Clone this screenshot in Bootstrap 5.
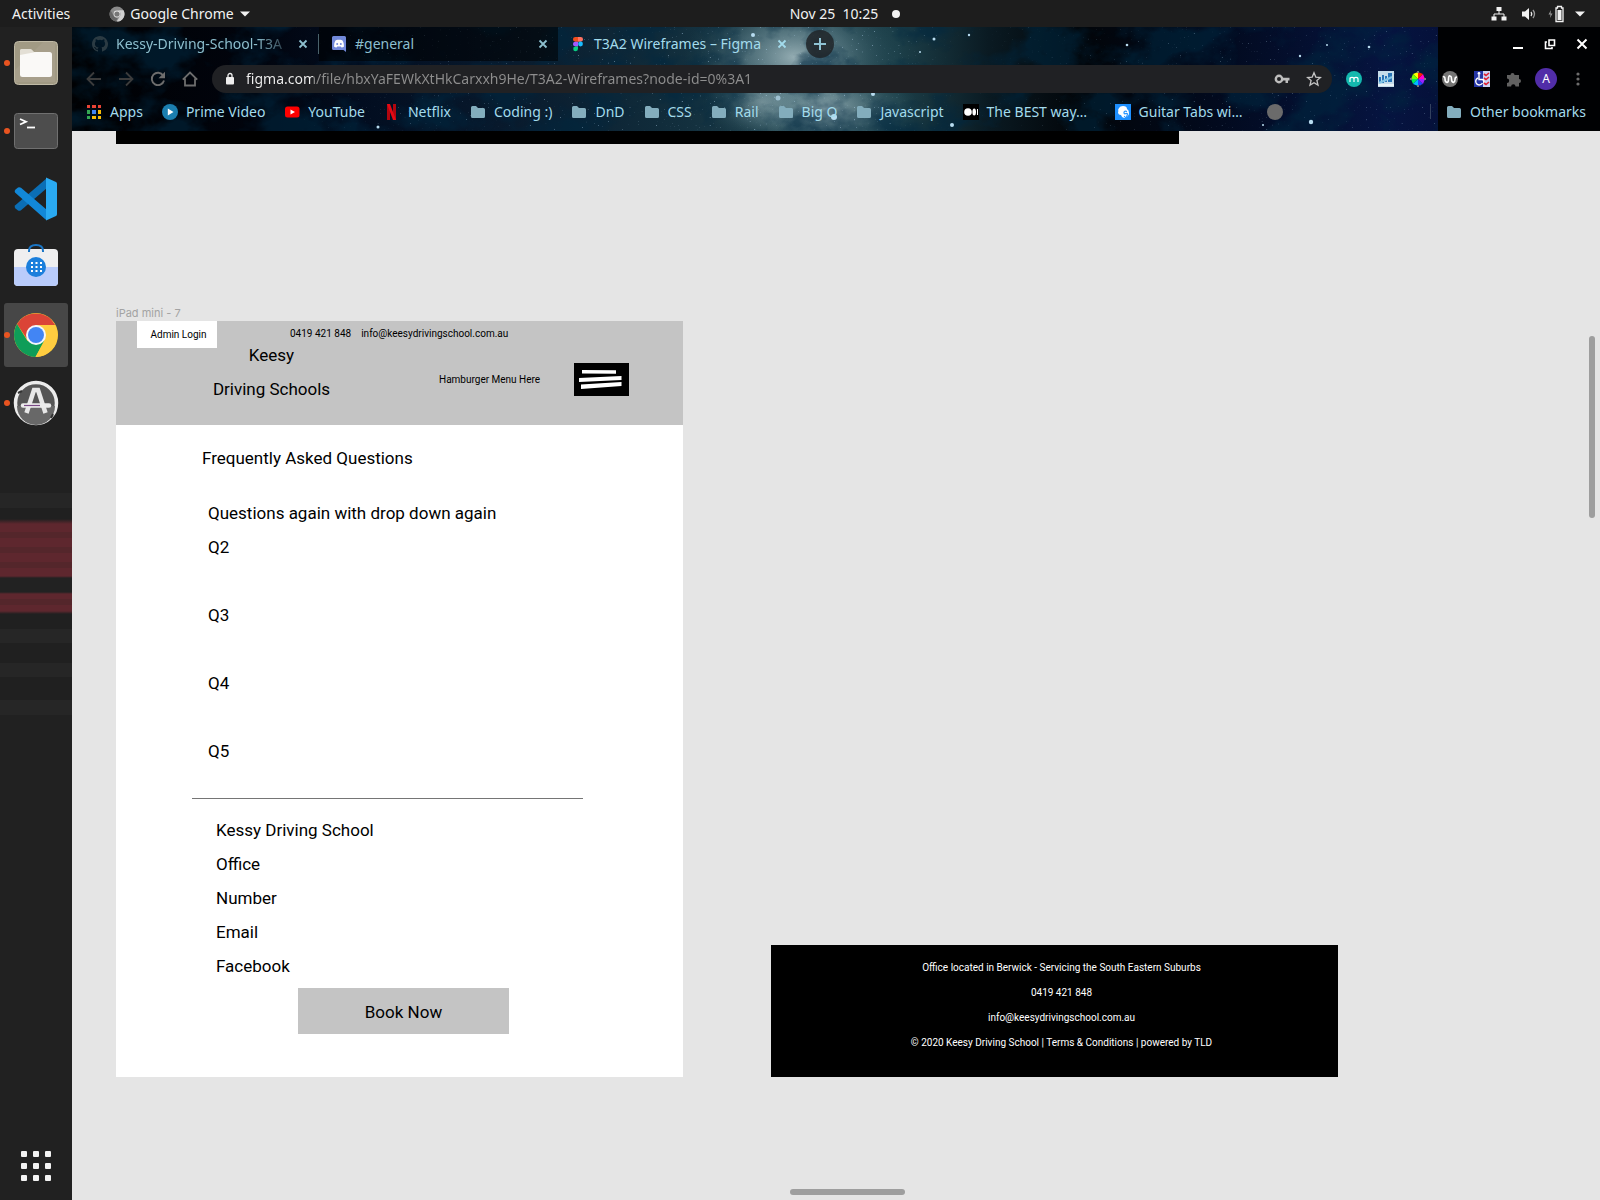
<!DOCTYPE html>
<html lang="en">
<head>
<meta charset="utf-8">
<meta name="viewport" content="width=device-width, initial-scale=1">
<title>T3A2 Wireframes – Figma</title>
<link href="https://cdn.jsdelivr.net/npm/bootstrap@5.3.0/dist/css/bootstrap.min.css" rel="stylesheet">
<style>
  body { background: #e5e5e5; font-family: "Noto Sans", sans-serif; font-size: 14px; line-height: 20px; color: #000; }
  svg { display: block; flex: none; }
  a { color: inherit; text-decoration: none; }
  button { border: 0; background: none; color: inherit; padding: 0; }

  /* desktop bar */
  .topbar { height: 27px; background: #1d1d1d; color: #f2f2f2; padding: 0 14px 0 12px; }
  .topbar-side { flex: 1 1 0; }
  .app-menu { margin-left: 39px; gap: 5px; }
  .topbar-clock { padding-left: 92px; gap: 14px; white-space: pre; }
  .rec-dot { width: 8px; height: 8px; border-radius: 50%; background: #f2f2f2; }

  /* dock */
  .dock { width: 72px; padding: 4px 4px 2px; gap: 4px;
    background: linear-gradient(#212121 0 466px, #262626 466px 481px, #202020 481px 492px, #5e272e 497px 505px, #54262b 505px 511px, #5e272e 511px 520px, #54262b 520px 526px, #5e272e 526px 535px, #54262b 535px 541px, #5e272e 541px 549px, #222 551px 565px, #5e272e 567px 572px, #54262b 572px 578px, #5e272e 578px 584px, #202020 587px 602px, #262626 602px 616px, #202020 616px 636px, #262626 636px 650px, #202020 650px 673px, #262626 673px 688px, #212121 688px); }
  .dock-item { height: 64px; width: 64px; border-radius: 3px; position: relative; display: flex; align-items: center; justify-content: center; }
  .dock-item.focused { background: #474747; }
  .dock-item.running::before { content: ""; position: absolute; left: 0; top: 29px; width: 6px; height: 6px; border-radius: 50%; background: #e95420; }

  /* browser */
  .browser { min-width: 0; }
  .browser-head { position: relative; height: 104px; color: #a3dbec; background: #000; }
  .sky { position: absolute; inset: 0; width: 100%; height: 100%; }
  .tabs, .toolbar, .bookmarks { position: relative; display: flex; align-items: center; }
  .tabs { height: 34px; padding-left: 8px; }
  .tab { width: 239px; height: 34px; padding: 0 7px 0 12px; gap: 8px; display: flex; align-items: center; }
  .tab.idle { background: rgba(0,0,0,.55); color: #8dbfce; }
  .tab.divided { border-right: 1px solid #4a626b; height: 20px; background: none; }
  .tab-text { flex: 1; white-space: nowrap; }
  .tab-text.faded { -webkit-mask-image: linear-gradient(90deg, #000 140px, rgba(0,0,0,.2) 172px); mask-image: linear-gradient(90deg, #000 140px, rgba(0,0,0,.2) 172px); }
  .new-tab { width: 28px; height: 28px; border-radius: 50%; background: rgba(32,36,40,.85); margin-left: 9px; display: flex; align-items: center; justify-content: center; }
  .win-controls { margin-left: auto; padding-right: 2px; }
  .tool { width: 32px; height: 32px; display: flex; align-items: center; justify-content: center; flex: none; }
  .toolbar { height: 36px; padding: 0 6px; }
  .omnibox { height: 28px; border-radius: 14px; background: #202124; margin: 0 6px; padding: 0 2px 0 12px; }
  .omnibox input { border: 0; outline: 0; padding: 0; margin-left: 10px; min-width: 0; color: transparent; background: linear-gradient(90deg, #f1f1f1 67px, #8e8e8e 67px); -webkit-background-clip: text; background-clip: text; }
  .profile { width: 22px; height: 22px; border-radius: 50%; background: #512da8; color: #fff; font-size: 12px; line-height: 22px; }
  .bookmarks { height: 30px; padding: 0 14px; gap: 19px; white-space: nowrap; }
  .bookmarks a { display: flex; align-items: center; gap: 8px; }
  .long-title { min-width: 109px; }
  .site-dot { width: 16px; height: 16px; border-radius: 50%; background: #6b6b6b; }

  /* design canvas */
  .canvas { position: relative; font-family: Roboto, sans-serif; padding-left: 44px; }
  .frame-above { height: 13px; max-width: 1063px; background: #000; }
  .artboards { margin-top: 161px; gap: 88px; }
  .artboard-label { font: 11px/16px Inter, sans-serif; color: #a3a3a3; }
  .artboard { width: 567px; background: #fff; font-size: 17px; line-height: 34px; padding-bottom: 43px; }
  .artboard-head { background: #c4c4c4; height: 104px; font-size: 10px; }
  .contact-row { height: 27px; padding-left: 21px; line-height: 26px; }
  .admin-btn { width: 80px; height: 27px; background: #fff; padding-left: 3px; }
  .contact-list { margin-left: 73px; gap: 10px; }
  .brand-row { margin-top: -10px; padding-left: 96px; }
  .brand { width: 119px; font-size: 17px; text-align: center; white-space: nowrap; }
  .menu-hint { margin-left: 108px; padding-top: 25px; width: 135px; }
  .menu-btn { width: 55px; height: 33px; background: #000; margin-top: 25px; }
  .faq-title { font-size: 17px; line-height: 34px; font-weight: 400; margin: 16px 0 21px 86px; }
  .faq-list { margin: 0 0 0 92px; padding: 0; list-style: none; }
  .faq-list li + li + li { margin-top: 34px; }
  .rule { width: 391px; height: 1px; background: #757575; margin: 30px 0 14px 76px; opacity: 1; border: 0; }
  .info-list { margin: 0 0 5px 100px; padding: 0; list-style: none; }
  .book-btn { display: block; width: 211px; height: 46px; background: #c4c4c4; margin-left: 182px; padding-top: 1px; }
  .footer-board { width: 567px; height: 132px; background: #000; color: #fff; font-size: 10px; line-height: 25px; padding: 10px 0 0 14px; text-align: center; }
  .bar-v, .bar-h { position: absolute; background: #9e9e9e; border-radius: 3px; }
  .bar-v { right: 5px; top: 205px; width: 6px; height: 182px; }
  .bar-h { left: 718px; bottom: 5px; width: 115px; height: 6px; }
</style>
<script src="https://cdn.jsdelivr.net/npm/bootstrap@5.3.0/dist/js/bootstrap.bundle.min.js"></script>
</head>
<body class="d-flex flex-column min-vh-100">

<svg width="0" height="0" class="position-absolute">
  <symbol id="folder" viewBox="0 0 16 16"><path d="M1 3.500a1.500 1.500 0 0 1 1.500-1.500H6l2 2h5.500A1.500 1.500 0 0 1 15 5.500v7a1.500 1.500 0 0 1-1.500 1.500h-11A1.500 1.500 0 0 1 1 12.500z" fill="#83adbd"/></symbol>
  <symbol id="cross" viewBox="0 0 16 16"><path d="M4.500 4.500l7 7M11.500 4.500l-7 7" stroke="currentColor" stroke-width="1.800" fill="none"/></symbol>
</svg>

<header class="topbar d-flex align-items-center">
  <div class="topbar-side d-flex align-items-center">
    <button>Activities</button>
    <button class="app-menu d-flex align-items-center">
      <svg width="16" height="16" viewBox="0 0 16 16"><circle cx="8" cy="8" r="7.500" fill="#8a8a8a"/><path d="M8 4.300h6.500a7.500 7.500 0 0 1-6.800 11.200l3.400-5.600A3.700 3.700 0 0 0 8 4.300z" fill="#d0d0d0"/><path d="M1.500 4.200L4.800 10a3.700 3.700 0 0 0 4 1.600L7 15.400A7.500 7.500 0 0 1 1.500 4.200z" fill="#666"/><circle cx="8" cy="8" r="3.400" fill="#e6e6e6"/><circle cx="8" cy="8" r="2.600" fill="#777"/></svg>
      <span>Google Chrome</span>
      <svg width="12" height="12" viewBox="0 0 12 12"><path d="M1 3.500h10L6 8.500z" fill="#f2f2f2"/></svg>
    </button>
  </div>
  <div class="topbar-clock d-flex align-items-center"><span>Nov 25  10:25</span><span class="rec-dot"></span></div>
  <div class="topbar-side d-flex align-items-center justify-content-end gap-2">
    <svg width="18" height="16" viewBox="0 0 18 16" fill="#f2f2f2"><path d="M6.500 1h5v4h-5zM1.500 10.500h5v4h-5zM11.500 10.500h5v4h-5z"/><path d="M9 5v3M4 11V8h10v3" stroke="#f2f2f2" fill="none"/></svg>
    <svg class="ms-1" width="18" height="16" viewBox="0 0 18 16"><path d="M2 5.500h3L9 2v12L5 10.500H2z" fill="#f2f2f2"/><path d="M11 6q1.500 2 0 4" stroke="#eee" stroke-width="1.300" fill="none"/><path d="M13 4q3 4 0 8" stroke="#999" stroke-width="1.300" fill="none"/></svg>
    <svg width="20" height="18" viewBox="0 0 20 18"><path d="M5 5L2.500 9.500h2L4 13l2.500-4.500h-2z" fill="#999"/><path d="M10 3h1.500V1.500h4V3H17v13.500h-7z" fill="none" stroke="#f2f2f2" stroke-width="1.300"/><path d="M11.500 5h4v10h-4z" fill="#f2f2f2"/></svg>
    <svg width="12" height="12" viewBox="0 0 12 12"><path d="M1 3.500h10L6 8.500z" fill="#f2f2f2"/></svg>
  </div>
</header>

<div class="d-flex flex-grow-1">
  <nav class="dock d-flex flex-column flex-shrink-0" aria-label="Dock">
    <a href="#" class="dock-item running" aria-label="Files"><svg width="46" height="46" viewBox="0 0 46 46"><rect x="1.500" y="1.500" width="43" height="43" rx="4" fill="#a19a84" stroke="#c0baa6"/><path d="M2 30L30 2h12v40H2z" fill="#aba48f" opacity=".6"/><path d="M7 11q0-2 2-2h8l4 3h1v8H7z" fill="#e3dfd5"/><rect x="7" y="12" width="32" height="25" rx="2.500" fill="#faf9f7"/><path d="M7 15V11q0-2 2-2h8q2 0 3 2t3 1z" fill="#e3dfd5"/></svg></a>
    <a href="#" class="dock-item running" aria-label="Terminal"><svg width="46" height="46" viewBox="0 0 46 46"><rect x="1.500" y="5.500" width="43" height="35" rx="3" fill="#4d4d4d" stroke="#707070"/><path d="M7 11l6 2.700L7 16.500" stroke="#fff" stroke-width="1.800" fill="none"/><path d="M14 19.500h8" stroke="#fff" stroke-width="1.800"/></svg></a>
    <a href="#" class="dock-item" aria-label="Visual Studio Code"><svg width="46" height="46" viewBox="0 0 46 46"><path d="M2 29.500q-1 1.500.5 3l2.500 2q1.500.8 3-.3L34 12V2z" fill="#0b6eb5"/><path d="M2 16.500q-1-1.500.5-3l2.500-2q1.500-.8 3 .3L34 34v10q-1 0-2-1z" fill="#1288d8"/><path d="M33 1.500L43 6q1 .6 1 2v30q0 1.400-1 2l-10 4.500z" fill="#2aaaf2"/></svg></a>
    <a href="#" class="dock-item" aria-label="Software"><svg width="46" height="46" viewBox="0 0 46 46"><rect x="1" y="5" width="44" height="37" rx="4" fill="#efeff0"/><path d="M1 23h44v15q0 4-4 4H5q-4 0-4-4z" fill="#b9ccfb"/><path d="M16 8V7q0-6 7-6t7 6v1" fill="none" stroke="#1a76c6" stroke-width="2"/><circle cx="23" cy="23" r="10" fill="#1b7fdc"/><path d="M18 19h11M18 23h11M18 27h11" stroke="#fff" stroke-width="2" stroke-dasharray="2 2.500"/></svg></a>
    <a href="#" class="dock-item running focused" aria-label="Google Chrome"><svg width="46" height="46" viewBox="0 0 46 46"><circle cx="23" cy="23" r="22" fill="#fc3"/><path d="M4 12A22 22 0 0 1 42.100 13H23l-9 14z" fill="#db4437"/><path d="M4 12a22 22 0 0 0 18.500 33L31 29 14.500 29z" fill="#0f9d58"/><path d="M23 13h19.100A22 22 0 0 1 22.500 45l9-16z" fill="#ffcd40"/><circle cx="23" cy="23" r="10" fill="#f4f6fb"/><circle cx="23" cy="23" r="8" fill="#4285f4"/></svg></a>
    <a href="#" class="dock-item running" aria-label="Software Updater"><svg width="46" height="46" viewBox="0 0 46 46"><circle cx="23" cy="23" r="20.500" fill="#555" stroke="#ececec" stroke-width="3.500"/><path d="M4 26h38a19 19 0 0 1-38 0z" fill="#686868"/><path d="M5 13l4-2M38 38l2-4" stroke="#333" stroke-width="2"/><path d="M13.500 33L21 10h4l7.500 23" fill="none" stroke="#e8e8e8" stroke-width="4.500"/><path d="M10 25.500h26" stroke="#ececec" stroke-width="4.500" stroke-linecap="round"/><path d="M11 25.500h16" stroke="#7a4a86" stroke-width="1.200"/></svg></a>
    <a href="#" class="dock-item mt-auto" aria-label="Show Applications"><svg width="30" height="30" viewBox="0 0 30 30" fill="#f2f2f2"><rect width="6" height="6" rx="1"/><rect x="12" width="6" height="6" rx="1"/><rect x="24" width="6" height="6" rx="1"/><rect y="12" width="6" height="6" rx="1"/><rect x="12" y="12" width="6" height="6" rx="1"/><rect x="24" y="12" width="6" height="6" rx="1"/><rect y="24" width="6" height="6" rx="1"/><rect x="12" y="24" width="6" height="6" rx="1"/><rect x="24" y="24" width="6" height="6" rx="1"/></svg></a>
  </nav>

  <div class="browser d-flex flex-column flex-grow-1">
    <div class="browser-head">
      <svg class="sky" viewBox="0 0 1528 104" preserveAspectRatio="none">
        <defs>
          <linearGradient id="base"><stop offset="0" stop-color="#000103"/><stop offset=".12" stop-color="#01040d"/><stop offset=".19" stop-color="#020d20"/><stop offset=".28" stop-color="#08192c"/><stop offset=".38" stop-color="#102b3a"/><stop offset=".46" stop-color="#1b3c48"/><stop offset=".54" stop-color="#1c3f49"/><stop offset=".6" stop-color="#0a1a22"/><stop offset=".66" stop-color="#020509"/><stop offset=".75" stop-color="#020a1e"/><stop offset=".86" stop-color="#061440"/><stop offset=".9" stop-color="#051039"/></linearGradient>
          <radialGradient id="glow"><stop offset="0" stop-color="#a9c0c5" stop-opacity=".85"/><stop offset=".5" stop-color="#6d8f98" stop-opacity=".5"/><stop offset="1" stop-color="#2a525c" stop-opacity="0"/></radialGradient>
          <filter id="cloud" x="0" y="0" width="1" height="1"><feTurbulence type="fractalNoise" baseFrequency=".018 .024" numOctaves="5" seed="8"/><feColorMatrix values="0 0 0 0 0  0 0 0 0 .02  0 0 0 0 .05  4 0 0 0 -1.700"/></filter>
          <filter id="dust" x="0" y="0" width="1" height="1"><feTurbulence type="fractalNoise" baseFrequency=".5" numOctaves="2" seed="3"/><feColorMatrix values="0 0 0 0 .45  0 0 0 0 .65  0 0 0 0 .85  10 0 0 0 -7.200"/></filter>
          <linearGradient id="fade"><stop offset=".15" stop-color="#000"/><stop offset=".3" stop-color="#bbb"/><stop offset=".58" stop-color="#fff"/><stop offset=".65" stop-color="#111"/><stop offset=".8" stop-color="#888"/></linearGradient>
          <mask id="starmask"><rect width="1366" height="104" fill="url(#fade)"/></mask>
        </defs>
        <rect width="1528" height="104" fill="url(#base)"/>
        <ellipse cx="722" cy="30" rx="110" ry="70" fill="url(#glow)"/>
        <ellipse cx="752" cy="82" rx="95" ry="46" fill="url(#glow)"/>
        <ellipse cx="690" cy="75" rx="60" ry="40" fill="url(#glow)" opacity=".6"/>
        <rect width="1366" height="104" filter="url(#cloud)" opacity=".6"/>
        <g mask="url(#starmask)"><rect width="1366" height="104" filter="url(#dust)" opacity=".5"/></g>
        <g fill="#b8dcf0"><circle cx="681" cy="8" r="2"/><circle cx="862" cy="12" r="1.500"/><circle cx="897" cy="8" r="1.200"/><circle cx="1055" cy="18" r="1.300"/><circle cx="1255" cy="18" r="1"/><circle cx="1297" cy="20" r="1.300"/><circle cx="1228" cy="29" r="1.200"/><circle cx="880" cy="98" r="2"/><circle cx="801" cy="67" r="2"/><circle cx="762" cy="90" r="3"/><circle cx="706" cy="71" r="2.500" opacity=".7"/><circle cx="1239" cy="95" r="2.200"/><circle cx="1191" cy="98" r="1"/><circle cx="306" cy="100" r="1.500"/><circle cx="345" cy="82" r="1"/><circle cx="848" cy="25" r="1"/></g>
        <path d="M1358.500 77v15" stroke="#33415f"/>
        <rect x="1366" width="162" height="104" fill="#000103"/>
      </svg>

      <div class="tabs">
        <div class="tab idle divided"><svg width="16" height="16" viewBox="0 0 16 16"><path fill="#2b3b43" d="M8 0C3.580 0 0 3.580 0 8c0 3.540 2.290 6.530 5.470 7.590.4.070.55-.17.55-.38 0-.19-.01-.82-.01-1.490-2.010.37-2.530-.49-2.690-.94-.09-.23-.48-.94-.82-1.130-.28-.15-.68-.52-.01-.53.63-.01 1.080.58 1.230.82.72 1.210 1.870.87 2.330.66.070-.52.28-.87.51-1.070-1.780-.2-3.640-.89-3.640-3.950 0-.87.31-1.590.82-2.150-.08-.2-.36-1.020.08-2.120 0 0 .67-.21 2.200.82a7.600 7.600 0 0 1 4 0c1.530-1.040 2.200-.82 2.200-.82.44 1.100.16 1.920.08 2.120.51.56.82 1.270.82 2.150 0 3.070-1.870 3.750-3.650 3.950.29.25.54.73.54 1.480 0 1.070-.01 1.930-.01 2.200 0 .21.15.46.55.38A8 8 0 0 0 8 0z"/></svg><a href="#" class="tab-text faded">Kessy-Driving-School-T3A</a><button aria-label="Close tab"><svg width="16" height="16"><use href="#cross"/></svg></button></div>
        <div class="tab idle"><svg width="16" height="16" viewBox="0 0 16 16"><path d="M2.500 0h11Q15 0 15 1.500V16l-2.500-2h-10Q1 14 1 12.500v-11Q1 0 2.500 0z" fill="#7289da"/><path d="M3 10.500q0-4 1.500-6Q6 3.500 7 3.800h2q1-.3 2.500.7Q13 6.500 13 10.500q-1 1-2.500 1l-.7-1H6.200l-.7 1q-1.500 0-2.500-1z" fill="#fff"/><circle cx="6.200" cy="8" r="1" fill="#7289da"/><circle cx="9.800" cy="8" r="1" fill="#7289da"/></svg><a href="#" class="tab-text">#general</a><button aria-label="Close tab"><svg width="16" height="16"><use href="#cross"/></svg></button></div>
        <div class="tab"><svg width="16" height="16" viewBox="0 0 16 16"><path d="M8 1v4.700H5.300a2.350 2.350 0 0 1 0-4.700z" fill="#f24e1e"/><path d="M8 1h2.700a2.350 2.350 0 0 1 0 4.700H8z" fill="#ff7262"/><path d="M8 5.700v4.700H5.300a2.350 2.350 0 0 1 0-4.700z" fill="#a259ff"/><circle cx="10.500" cy="8" r="2.400" fill="#1abcfe"/><path d="M8 10.400v2.300a2.400 2.400 0 1 1-2.500-2.300z" fill="#0acf83"/></svg><a href="#" class="tab-text">T3A2 Wireframes – Figma</a><button aria-label="Close tab"><svg width="16" height="16"><use href="#cross"/></svg></button></div>
        <button class="new-tab" aria-label="New tab"><svg width="14" height="14" viewBox="0 0 14 14"><path d="M7 1v12M1 7h12" stroke="#8fc3d4" stroke-width="2"/></svg></button>
        <div class="win-controls d-flex text-white">
          <button class="tool" aria-label="Minimize"><svg width="12" height="12" viewBox="0 0 12 12"><path d="M1 10h10" stroke="#fff" stroke-width="2"/></svg></button>
          <button class="tool" aria-label="Restore"><svg width="12" height="12" viewBox="0 0 12 12" fill="none" stroke="#fff" stroke-width="1.600"><path d="M5 2h5.500v5.500H5zM3 4H1.500v6.500H8V9"/></svg></button>
          <button class="tool" aria-label="Close"><svg width="12" height="12" viewBox="0 0 12 12"><path d="M1.500 1.500l9 9M10.500 1.500l-9 9" stroke="#fff" stroke-width="2"/></svg></button>
        </div>
      </div>

      <div class="toolbar">
        <button class="tool" aria-label="Back"><svg width="16" height="16" viewBox="0 0 16 16" fill="none" stroke="#3c3c3c" stroke-width="1.800"><path d="M15 8H2M8 1.500L1.500 8 8 14.500"/></svg></button>
        <button class="tool" aria-label="Forward"><svg width="16" height="16" viewBox="0 0 16 16" fill="none" stroke="#3c3c3c" stroke-width="1.800"><path d="M1 8h13M8 1.500L14.500 8 8 14.500"/></svg></button>
        <button class="tool" aria-label="Reload"><svg width="16" height="16" viewBox="0 0 16 16"><path d="M13.200 4.500A6.200 6.200 0 1 0 14 9.500" fill="none" stroke="#6d6d6d" stroke-width="1.900"/><path d="M15 .8v6.500H8.500z" fill="#6d6d6d"/></svg></button>
        <button class="tool" aria-label="Home"><svg width="16" height="16" viewBox="0 0 16 16" fill="none" stroke="#6d6d6d" stroke-width="1.800"><path d="M.8 8.700L8 1.500l7.200 7.200M3 7.500v7h10v-7"/></svg></button>
        <div class="omnibox d-flex align-items-center flex-grow-1">
          <svg width="12" height="14" viewBox="0 0 12 14"><rect x="2" y="5" width="8" height="7.500" rx="1" fill="#eee"/><path d="M4 5.500v-2a2 2 0 0 1 4 0v2" fill="none" stroke="#eee" stroke-width="1.300"/></svg>
          <input class="flex-grow-1" type="text" aria-label="Address" value="figma.com/file/hbxYaFEWkXtHkCarxxh9He/T3A2-Wireframes?node-id=0%3A1">
          <button class="tool" aria-label="Passwords"><svg width="16" height="16" viewBox="0 0 16 16"><circle cx="5" cy="8" r="3.200" fill="none" stroke="#bdbdbd" stroke-width="2.400"/><path d="M8 6.800h7.500v2.700H14V12h-2.500V9.500H8z" fill="#bdbdbd"/></svg></button>
          <button class="tool" aria-label="Bookmark"><svg width="16" height="16" viewBox="0 0 16 16"><path d="M8 1.800l1.800 4.300 4.700.4-3.600 3 1.100 4.600L8 11.700l-4 2.400 1.100-4.600-3.600-3 4.700-.4z" fill="none" stroke="#c4c4c4" stroke-width="1.300"/></svg></button>
        </div>
        <button class="tool" aria-label="Extension m"><svg width="16" height="16" viewBox="0 0 16 16"><circle cx="8" cy="8" r="8" fill="#14b8ae"/><path d="M4 11V6.500M4 8q0-1.700 2-1.700T8 8v3M8 8q0-1.700 2-1.700T12 8v3" fill="none" stroke="#fff" stroke-width="1.200"/></svg></button>
        <button class="tool" aria-label="Extension chart"><svg width="16" height="16" viewBox="0 0 16 16"><rect width="16" height="16" fill="#c5dcea"/><path d="M1 6h2v5H1zM4 4h2v8H4zM7 5h2v6H7zM10 2h4v9h-4z" fill="#2874b8"/><path d="M1 12L14 6" stroke="#82c4e5" stroke-width="2"/><path d="M0 14h16" stroke="#e8f2f7" stroke-width="2"/></svg></button>
        <button class="tool" aria-label="Colour picker"><svg width="16" height="16" viewBox="0 0 16 16"><path d="M8 8V1L3 3z" fill="#ff0"/><path d="M8 8L3 3 1 8z" fill="#7f0"/><path d="M8 8H1l2 5z" fill="#0e5"/><path d="M8 8l-5 5 5 2z" fill="#0bf"/><path d="M8 8v7l5-2z" fill="#24f"/><path d="M8 8l5 5 2-5z" fill="#92f"/><path d="M8 8h7l-2-5z" fill="#f0c"/><path d="M8 8l5-5-5-2z" fill="#f20"/><path d="M8 0v2M8 14v2M0 8h2M14 8h2" stroke="#777" stroke-width="2"/></svg></button>
        <button class="tool" aria-label="Extension wave"><svg width="16" height="16" viewBox="0 0 16 16"><circle cx="8" cy="8" r="8" fill="#757575"/><path d="M1 6q2-1 2 2t2 3.500q1.500 0 1.500-3.500T8 5q1.500 0 1.500 3t2 3.500q1.500-.5 1.500-3T15 6" fill="none" stroke="#fff" stroke-width="1.600"/></svg></button>
        <button class="tool" aria-label="Accessibility"><svg width="16" height="16" viewBox="0 0 16 16"><rect width="16" height="16" fill="#ccd3f3"/><path d="M0 0h9v16H0z" fill="#2535a5"/><circle cx="5" cy="2.500" r="1.400" fill="#fff"/><path d="M5 4v4.500h4l1.500 4M4 7a3.600 3.600 0 1 0 4.500 5" fill="none" stroke="#fff" stroke-width="1.400"/><path d="M10 3l2 1.500L15 2M10 7l2 1.500L15 6M10 12l2 1.500 3-2.500" fill="none" stroke="#e02030" stroke-width="1.600"/></svg></button>
        <button class="tool" aria-label="Extensions"><svg width="16" height="16" viewBox="0 0 16 16"><path d="M1 4h3.500a2 2 0 1 1 4 0H13v4a2 2 0 1 1 0 4v3.500H9.500a2.200 2.200 0 0 0-4.400 0H1V12a2.200 2.200 0 0 0 0-4.400z" fill="#616161"/></svg></button>
        <button class="tool" aria-label="Profile"><span class="profile">A</span></button>
        <button class="tool" aria-label="Menu"><svg width="16" height="16" viewBox="0 0 16 16" fill="#6d6d6d"><circle cx="8" cy="3" r="1.600"/><circle cx="8" cy="8" r="1.600"/><circle cx="8" cy="13" r="1.600"/></svg></button>
      </div>

      <nav class="bookmarks" aria-label="Bookmarks">
        <a href="#"><svg width="16" height="16" viewBox="0 0 16 16"><path d="M1 1h3v3H1zM6 1h4v3H6zM12 1h3v3h-3z" fill="#ea4335"/><path d="M1 6h3v4H1zM1 12h3v3H1z" fill="#34a853"/><path d="M6 6h4v4H6z" fill="#4285f4"/><path d="M12 6h3v4h-3zM6 12h4v3H6zM12 12h3v3h-3z" fill="#fbbc05"/></svg>Apps</a>
        <a href="#"><svg width="16" height="16" viewBox="0 0 16 16"><circle cx="8" cy="8" r="8" fill="#1b7fb0"/><path d="M5.800 4.500L11.500 8l-5.700 3.500z" fill="#fff"/></svg>Prime Video</a>
        <a href="#"><svg width="16" height="16" viewBox="0 0 16 16"><rect x="1" y="2.500" width="14.500" height="11" rx="2.500" fill="#f00"/><path d="M6.500 5.500L11 8l-4.500 2.500z" fill="#fff"/></svg>YouTube</a>
        <a href="#"><svg width="16" height="16" viewBox="0 0 16 16"><path d="M3 0h3v16l-3 .3zM9 0h3v16H9z" fill="#b1060f"/><path d="M3 0h3l6 16H9z" fill="#e50914"/></svg>Netflix</a>
        <a href="#"><svg width="16" height="16"><use href="#folder"/></svg>Coding :)</a>
        <a href="#"><svg width="16" height="16"><use href="#folder"/></svg>DnD</a>
        <a href="#"><svg width="16" height="16"><use href="#folder"/></svg>CSS</a>
        <a href="#"><svg width="16" height="16"><use href="#folder"/></svg>Rail</a>
        <a href="#"><svg width="16" height="16"><use href="#folder"/></svg>Big O</a>
        <a href="#"><svg width="16" height="16"><use href="#folder"/></svg>Javascript</a>
        <a href="#"><svg width="16" height="16" viewBox="0 0 16 16"><path d="M0 0h16v16H0z" fill="#000"/><circle cx="5" cy="8" r="3.800" fill="#fff"/><ellipse cx="11.200" cy="8" rx="1.800" ry="3.500" fill="#fff"/><path d="M14.500 5v6" stroke="#fff"/></svg><span class="long-title">The BEST way…</span></a>
        <a href="#"><svg width="16" height="16" viewBox="0 0 16 16"><path d="M0 0h16v16H0z" fill="#1e90ff"/><path d="M4 4q1-2 4-2 4 0 4 3 2 1 2 4t-4 5q-3 0-4-3-3 0-3-3 1-1 0-2z" fill="#fff"/><path d="M12 7.500q-3-1-3 1t2 1 1 2.300-2.800.2" fill="none" stroke="#1e90ff" stroke-width="1.200"/></svg><span class="long-title">Guitar Tabs wi…</span></a>
        <a href="#" aria-label="Untitled bookmark"><span class="site-dot"></span></a>
        <a href="#" class="ms-auto"><svg width="16" height="16"><use href="#folder"/></svg>Other bookmarks</a>
      </nav>
    </div>

    <main class="canvas flex-grow-1">
      <div class="frame-above"></div>
      <div class="artboards d-flex align-items-end">
        <section>
          <div class="artboard-label">iPad mini - 7</div>
          <div class="artboard">
            <div class="artboard-head">
              <div class="contact-row d-flex">
                <button class="admin-btn">Admin Login</button>
                <div class="contact-list d-flex"><span>0419 421 848</span><span>info@keesydrivingschool.com.au</span></div>
              </div>
              <div class="brand-row d-flex align-items-start">
                <div class="brand">Keesy<br>Driving Schools</div>
                <span class="menu-hint">Hamburger Menu Here</span>
                <button class="menu-btn" aria-label="Menu"><svg width="54" height="33" viewBox="0 0 54 33" fill="#fff"><path d="M8 7l34 .3v3.500L8 10.500zM5 15l42.500-2v4L5 19zM7 21.500L47.500 19v4L7 26z"/></svg></button>
              </div>
            </div>
            <h1 class="faq-title">Frequently Asked Questions</h1>
            <ul class="faq-list"><li>Questions again with drop down again</li><li>Q2</li><li>Q3</li><li>Q4</li><li>Q5</li></ul>
            <hr class="rule">
            <ul class="info-list"><li>Kessy Driving School</li><li>Office</li><li>Number</li><li>Email</li><li>Facebook</li></ul>
            <button class="book-btn">Book Now</button>
          </div>
        </section>
        <footer class="footer-board">
          <div>Office located in Berwick - Servicing the South Eastern Suburbs</div>
          <div>0419 421 848</div>
          <div>info@keesydrivingschool.com.au</div>
          <div>© 2020 Keesy Driving School | Terms &amp; Conditions | powered by TLD</div>
        </footer>
      </div>
      <div class="bar-v"></div>
      <div class="bar-h"></div>
    </main>
  </div>
</div>
</body>
</html>
